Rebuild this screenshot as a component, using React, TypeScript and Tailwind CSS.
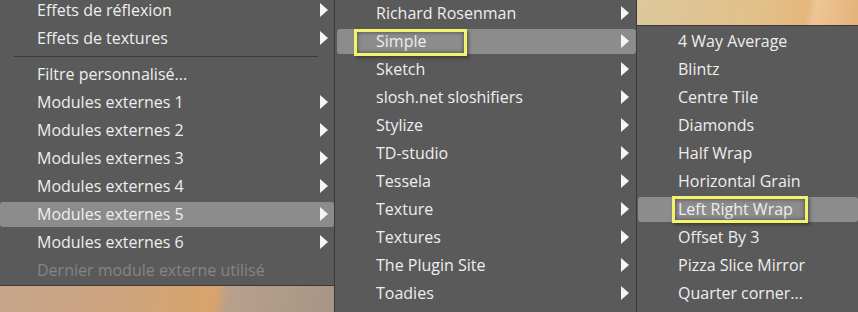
import React from 'react';

type Item = { label: string; sub?: boolean; active?: boolean; disabled?: boolean; sep?: boolean; mark?: boolean };

const MENU1: Item[] = [
  { label: 'Effets de réflexion', sub: true },
  { label: 'Effets de textures', sub: true },
  { label: '', sep: true },
  { label: 'Filtre personnalisé...' },
  { label: 'Modules externes 1', sub: true },
  { label: 'Modules externes 2', sub: true },
  { label: 'Modules externes 3', sub: true },
  { label: 'Modules externes 4', sub: true },
  { label: 'Modules externes 5', sub: true, active: true },
  { label: 'Modules externes 6', sub: true },
  { label: 'Dernier module externe utilisé', disabled: true },
];

const MENU2: Item[] = [
  { label: 'Richard Rosenman', sub: true },
  { label: 'Simple', sub: true, active: true, mark: true },
  { label: 'Sketch', sub: true },
  { label: 'slosh.net sloshifiers', sub: true },
  { label: 'Stylize', sub: true },
  { label: 'TD-studio', sub: true },
  { label: 'Tessela', sub: true },
  { label: 'Texture', sub: true },
  { label: 'Textures', sub: true },
  { label: 'The Plugin Site', sub: true },
  { label: 'Toadies', sub: true },
];

const MENU3: Item[] = [
  { label: '4 Way Average' },
  { label: 'Blintz' },
  { label: 'Centre Tile' },
  { label: 'Diamonds' },
  { label: 'Half Wrap' },
  { label: 'Horizontal Grain' },
  { label: 'Left Right Wrap', active: true, mark: true },
  { label: 'Offset By 3' },
  { label: 'Pizza Slice Mirror' },
  { label: 'Quarter corner...' },
];

const Arrow = () => (
  <svg width="8" height="14" viewBox="0 0 8 14" className="flex-shrink-0">
    <path d="M0 0 L8 7 L0 14 Z" fill="#f4f4f4" />
  </svg>
);

function Row({ it, pl, pr, hl, mark }: { it: Item; pl: string; pr: string; hl: string; mark: string }) {
  if (it.sep) {
    return (
      <div className="h-[8px] flex items-center pl-[14px] pr-[16px]">
        <div className="h-px w-full bg-[#3a3a3a]" />
      </div>
    );
  }
  return (
    <div className="h-[28px] py-[1.5px] relative">
      <div className={`h-full flex items-center justify-between rounded-[3px] ${hl} ${pl} ${pr} ${it.active ? 'bg-[#8c8c8c]' : ''}`}>
        <span className={`whitespace-nowrap leading-none ${it.disabled ? 'text-[#858585]' : 'text-[#eeeeee]'}`}>{it.label}</span>
        {it.sub && <Arrow />}
      </div>
      {it.mark && (
        <div className={`absolute border-[3px] border-[#f3f36e] shadow-[inset_0_0_4px_rgba(0,0,0,0.5),2px_2px_3px_rgba(0,0,0,0.35)] ${mark}`} />
      )}
    </div>
  );
}

export default function App() {
  return (
    <div className="w-[858px] h-[312px] flex overflow-hidden bg-[#5a5a5a] text-[16px]" style={{ fontFamily: '"Segoe UI", "Open Sans", sans-serif' }}>
      {/* menu 1 */}
      <div className="w-[334px] flex flex-col flex-shrink-0">
        <div className="h-[286px] border-b border-[#3a3a3a] overflow-hidden">
          <div className="-mt-[4px]">
            {MENU1.map((it, i) => (
              <Row key={i} it={it} pl="pl-[37px]" pr="pr-[6px]" hl="" mark="" />
            ))}
          </div>
        </div>
        <div className="flex-1 bg-[linear-gradient(100deg,#c4a58a_0%,#cfa47c_40%,#d8a36c_64%,#b8a08c_68%,#a89585_100%)]" />
      </div>

      {/* menu 2 */}
      <div className="w-[303px] flex-shrink-0 border-l border-r border-[#3a3a3a] overflow-hidden">
        <div className="-mt-px">
          {MENU2.map((it, i) => (
            <Row key={i} it={it} pl="pl-[39px]" pr="pr-[7px]" hl="ml-[2px]" mark="left-[19px] top-[2px] w-[113px] h-[27px]" />
          ))}
        </div>
      </div>

      {/* menu 3 */}
      <div className="flex-1 flex flex-col">
        <div className="h-[25px] bg-[linear-gradient(100deg,#dcc89c_0%,#e2c08a_55%,#e6b67c_76%,#eec596_80%,#e4b27a_100%)]" />
        <div className="flex-1 border-t border-[#3a3a3a] pt-px overflow-hidden">
          {MENU3.map((it, i) => (
            <Row key={i} it={it} pl="pl-[40px]" pr="pr-[6px]" hl="ml-px" mark="left-[35px] top-[1px] w-[136px] h-[27px]" />
          ))}
        </div>
      </div>
    </div>
  );
}
